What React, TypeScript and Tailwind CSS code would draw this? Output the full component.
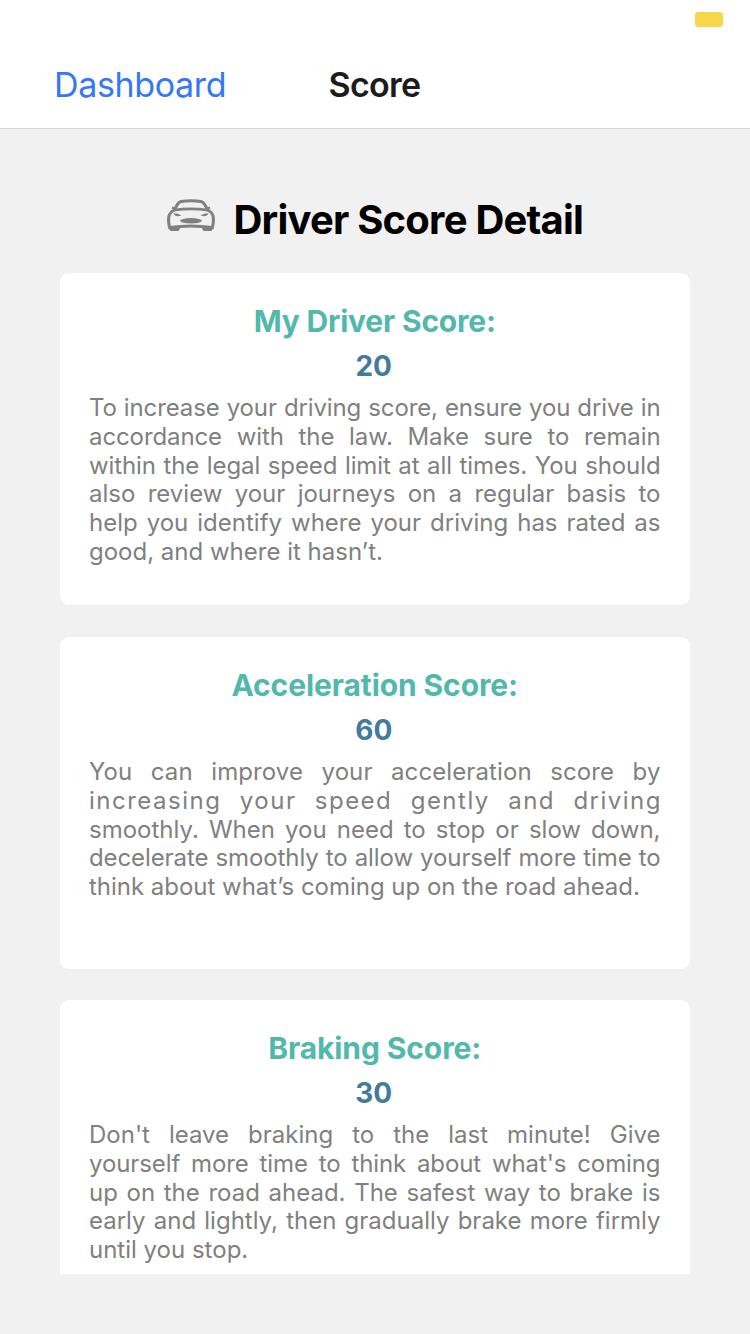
import React from "react";

type Line = { text: string; spacing?: string };
type Score = { title: string; titleSpacing: string; value: number; gap: string; lines: Line[] };

const scores: Score[] = [
  {
    title: "My Driver Score:",
    titleSpacing: "tracking-[-0.2px]",
    value: 20,
    gap: "mb-8",
    lines: [
      { text: "To increase your driving score, ensure you drive in", spacing: "tracking-[-0.12px]" },
      { text: "accordance with the law. Make sure to remain", spacing: "tracking-[-0.1px]" },
      { text: "within the legal speed limit at all times. You should", spacing: "tracking-[-0.1px]" },
      { text: "also review your journeys on a regular basis to" },
      { text: "help you identify where your driving has rated as" },
      { text: "good, and where it hasn’t." },
    ],
  },
  {
    title: "Acceleration Score:",
    titleSpacing: "tracking-[-0.1px]",
    value: 60,
    gap: "mb-[31px]",
    lines: [
      { text: "You can improve your acceleration score by", spacing: "tracking-[0.1px]" },
      { text: "increasing your speed gently and driving", spacing: "tracking-[1.5px] mr-[-1.5px]" },
      { text: "smoothly. When you need to stop or slow down," },
      { text: "decelerate smoothly to allow yourself more time to", spacing: "tracking-[-0.1px]" },
      { text: "think about what’s coming up on the road ahead.", spacing: "tracking-[-0.02px]" },
    ],
  },
  {
    title: "Braking Score:",
    titleSpacing: "tracking-[-0.1px]",
    value: 30,
    gap: "mb-8",
    lines: [
      { text: "Don't leave braking to the last minute! Give" },
      { text: "yourself more time to think about what's coming", spacing: "tracking-[-0.1px]" },
      { text: "up on the road ahead. The safest way to brake is" },
      { text: "early and lightly, then gradually brake more firmly" },
      { text: "until you stop." },
    ],
  },
];

function CarIcon() {
  return (
    <svg className="mt-px h-[34px] w-[50px] shrink-0" viewBox="0 0 50 34" fill="none" stroke="#808080">
      <path d="M8.500 10.500 L11.500 5.200 Q12.800 3 15 2.500 Q25 0.900 35 2.500 Q37.200 3 38.500 5.200 L41.500 10.500" strokeWidth="3" />
      <path d="M8 11.200 Q25 8.600 42 11.200" strokeWidth="2.800" />
      <path d="M9 9.800 L6 8.500 M41 9.800 L44 8.500" strokeWidth="2.400" />
      <path d="M8.500 11 Q4 13 2.800 17.500 Q1.900 23 4 30 M41.500 11 Q46 13 47.200 17.500 Q48.100 23 46 30" strokeWidth="3" />
      <path d="M3.500 28.600 Q25 25.400 46.500 28.600" strokeWidth="3" />
      <path d="M3 28 L15 27.500 L13.200 31 Q12.800 32 11.800 32 L5.200 32 Q3.900 32 3.600 30.500 Z M47 28 L35 27.500 L36.800 31 Q37.200 32 38.200 32 L44.800 32 Q46.100 32 46.400 30.500 Z" fill="#808080" stroke="none" />
      <path d="M7.500 14.300 Q12 14.300 15.500 16.600 Q9 18.600 7.500 14.300 Z M42.500 14.300 Q38 14.300 34.500 16.600 Q41 18.600 42.500 14.300 Z" fill="#808080" stroke="none" />
      <ellipse cx="25" cy="21.800" rx="11" ry="2.700" fill="#808080" stroke="none" />
    </svg>
  );
}

function ScoreCard({ score }: { score: Score }) {
  return (
    <section className={`h-[332px] shrink-0 rounded-[9px] bg-white pt-[26px] pr-[29.5px] pl-[29px] ${score.gap}`}>
      <h2 className={`h-[45px] text-center text-[30px] leading-[45px] font-bold text-[#52b8ac] ${score.titleSpacing}`}>
        {score.title}
      </h2>
      <div className="h-[44px] pr-[2px] text-center text-[28px] leading-[45px] font-bold text-[#447a9c]">{score.value}</div>
      <p className="mt-[6px] text-[24px] leading-[28.8px] text-[#808080]">
        {score.lines.map((line, i) => (
          <span
            key={line.text}
            className={`block whitespace-nowrap ${line.spacing ?? "tracking-[0px]"} ${
              i < score.lines.length - 1 ? "[text-align-last:justify]" : ""
            }`}
          >
            {line.text}
          </span>
        ))}
      </p>
    </section>
  );
}

export default function App() {
  return (
    <div className="flex h-[1334px] w-[750px] flex-col overflow-hidden bg-[#f1f1f1] font-['Inter',sans-serif]">
      <header className="flex h-[129px] shrink-0 flex-col border-b border-[#d9d9d9] bg-white">
        <div className="flex h-10 justify-end pt-3 pr-[27px]">
          <div className="h-[15px] w-7 rounded-[3px] bg-[#f8d74a]" />
        </div>
        <nav className="grid h-[88px] grid-cols-3 items-center pt-px text-[34px] leading-[86px]">
          <a className="pl-[54px] tracking-[-0.35px] text-[#3478f6]">Dashboard</a>
          <h1 className="pr-[1px] text-center font-semibold tracking-[-0.7px] text-[#1c1c1e]">Score</h1>
        </nav>
      </header>
      <main className="flex h-[1145px] flex-col overflow-hidden px-[60px]">
        <div className="flex h-[144px] shrink-0 items-start pt-[69px] pl-[106px]">
          <CarIcon />
          <div className="ml-[17.5px] h-11 whitespace-nowrap text-[40px] leading-11 font-bold tracking-[-0.78px] text-black">
            Driver Score Detail
          </div>
        </div>
        <div className="flex flex-col">
          {scores.map((score) => (
            <ScoreCard key={score.title} score={score} />
          ))}
        </div>
      </main>
    </div>
  );
}
